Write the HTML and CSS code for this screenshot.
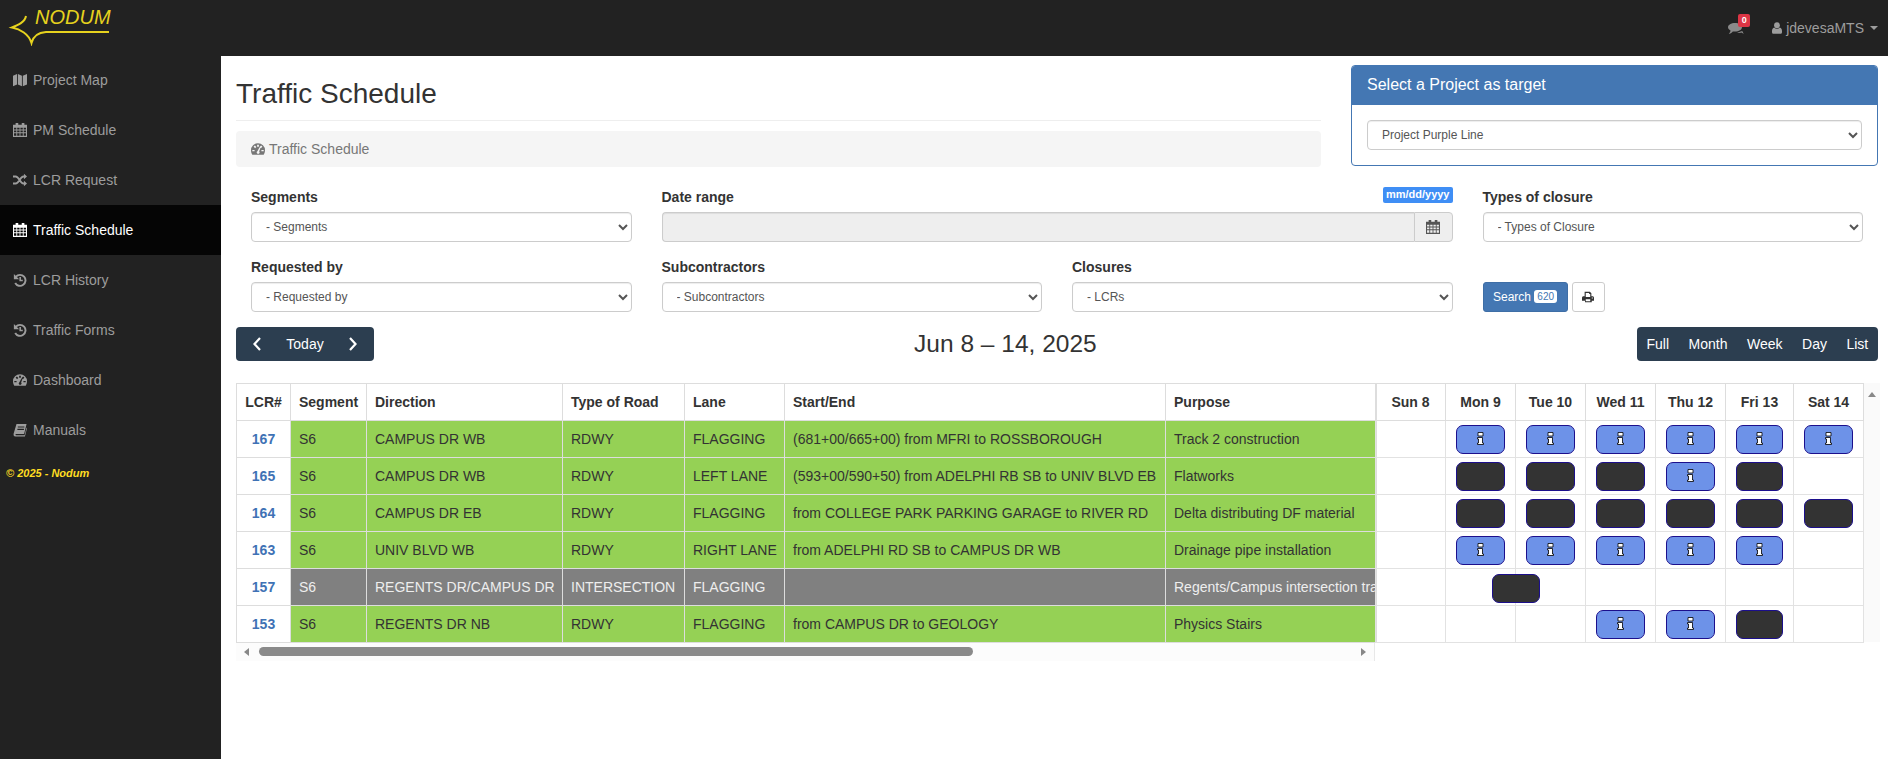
FILE: index.html
```html
<!DOCTYPE html>
<html lang="en">
<head>
<meta charset="utf-8">
<title>Traffic Schedule</title>
<link rel="stylesheet" href="styles.css">
</head>
<body>
<svg class="sprite" xmlns="http://www.w3.org/2000/svg">
  <symbol id="i-map" viewBox="0 0 16 16"><path d="M0 3.2 4.6 1v12L0 15.2zM5.6 1l4.6 2.2v12L5.6 13zM11.2 3.2 16 1v12l-4.8 2.2z"/></symbol>
  <symbol id="i-cal" viewBox="0 0 16 16"><path fill-rule="evenodd" d="M3 0h3v2h4V0h3v2h3v14H0V2h3zM1.2 5.5v2h2.6v-2zm3.6 0v2h2.7v-2zm3.7 0v2h2.700v-2zm3.700 0v2h2.600v-2zM1.200 8.500v2.200h2.600V8.500zm3.600 0v2.200h2.700V8.500zm3.700 0v2.200h2.700V8.500zm3.700 0v2.200h2.600V8.500zM1.200 11.700v3h2.600v-3zm3.600 0v3h2.700v-3zm3.700 0v3h2.700v-3zm3.700 0v3h2.600v-3z"/></symbol>
  <symbol id="i-random" viewBox="0 0 16 16"><path d="M0 4h3c4 0 5 8 9 8h1M0 12h3c4 0 5-8 9-8h1" fill="none" stroke="currentColor" stroke-width="2.1"/><path d="M12.500 .8 16 4l-3.500 3.200zM12.500 8.800 16 12l-3.500 3.200z"/></symbol>
  <symbol id="i-history" viewBox="0 0 16 16"><path d="M3.300 4.200A6.300 6.300 0 1 1 2.500 11.500" fill="none" stroke="currentColor" stroke-width="2.2"/><path d="M1 1v6h6z"/><path d="M8.200 4.500v4h3" fill="none" stroke="currentColor" stroke-width="1.8"/></symbol>
  <symbol id="i-gauge" viewBox="0 0 16 16"><path fill-rule="evenodd" d="M8 1.500a8 8 0 0 0-8 8c0 2 .6 3.700 1.500 5h13c.9-1.300 1.500-3 1.500-5a8 8 0 0 0-8-8zM7 3h2v2.500H7zM3 5.200l1.500-1.300 1.600 1.800-1.500 1.300zM1.500 9h2.600v1.700H1.500zM11.900 9h2.600v1.700h-2.600zM11.500 3.900 13 5.200l-1.600 1.800-1.500-1.300zM9.800 6l1 .5-1.500 4.300a1.600 1.600 0 1 1-2-.2z"/></symbol>
  <symbol id="i-book" viewBox="0 0 16 16"><path fill-rule="evenodd" d="M4 1h11.500l-2.800 11.500H3.600c-1 0-1.300 1.500 0 1.500h9.700l2.200-9 .5 1-2.400 9.500H3C.6 15.500.2 13 1 11zM5.500 4v1.200h7.500V4zM5 6.700v1.200h7.500V6.700z"/></symbol>
  <symbol id="i-comments" viewBox="0 0 16 14"><path d="M7 1c3.900 0 7 1.900 7 4.300S10.900 9.600 7 9.600c-.8 0-1.500-.1-2.200-.2C3.700 11 2 11.800 .8 11.800c1-.9 1.600-2 1.700-3.300C1 7.600 0 6.500 0 5.300 0 2.900 3.100 1 7 1z"/><path d="M9 11c3 0 4-.2 4.500-.5.600.7 1.500 1.100 2.300 1.200-.6-.6-.9-1.300-1-2-.8-.8-1.800-.5-5.800 1.300z"/></symbol>
  <symbol id="i-user" viewBox="0 0 12 14"><circle cx="6" cy="3.700" r="3.500"/><path d="M2.700 6.500C3.600 7.400 4.700 8 6 8s2.400-.6 3.300-1.500C11 6.800 12 8.500 12 11v1c0 1-.8 2-2 2H2c-1.200 0-2-1-2-2v-1c0-2.500 1-4.200 2.700-4.500z"/></symbol>
  <symbol id="i-print" viewBox="0 0 16 16"><path fill-rule="evenodd" d="M3.500 1h7l2 2v4h1.500c1.100 0 2 .9 2 2v4h-3v2h-9v-2H0V9c0-1.100.9-2 2-2h1.500zM5 2.500V8h6V4h-1.500V2.500zM5 11v2.500h6V11zM13 8.500v1.500h1.500V8.500z"/></symbol>
  <symbol id="i-info" viewBox="0 0 7 13"><path d="M1 .5h5v3.500H1zM.5 5.500h5v5.500h1v1.500H.5V11h1V7h-1z" fill="#fff" stroke="#000" stroke-width=".8"/></symbol>
</svg>

<header class="topbar">
  <a class="logo">
    <svg class="logo-mark" viewBox="0 0 110 46" aria-hidden="true">
      <path d="M20 16C19 22 12 25 6 27.500 14 29 23 34 25.500 43 27 37 32 32.500 40 32H103" fill="none" stroke="#e6d21e" stroke-width="2"/>
    </svg>
    <span class="logo-text">NODUM</span>
  </a>
  <div class="top-right">
    <span class="msg">
      <svg class="msg-icon"><use href="#i-comments"/></svg>
      <span class="msg-badge">0</span>
    </span>
    <span class="account">
      <svg class="user-icon"><use href="#i-user"/></svg>
      <span>jdevesaMTS</span>
      <span class="caret"></span>
    </span>
  </div>
</header>

<div class="shell">
  <aside class="sidebar">
    <nav class="nav">
      <a class="nav-item"><svg class="ico"><use href="#i-map"/></svg>Project Map</a>
      <a class="nav-item"><svg class="ico"><use href="#i-cal"/></svg>PM Schedule</a>
      <a class="nav-item"><svg class="ico"><use href="#i-random"/></svg>LCR Request</a>
      <a class="nav-item active"><svg class="ico"><use href="#i-cal"/></svg>Traffic Schedule</a>
      <a class="nav-item"><svg class="ico"><use href="#i-history"/></svg>LCR History</a>
      <a class="nav-item"><svg class="ico"><use href="#i-history"/></svg>Traffic Forms</a>
      <a class="nav-item"><svg class="ico"><use href="#i-gauge"/></svg>Dashboard</a>
      <a class="nav-item"><svg class="ico"><use href="#i-book"/></svg>Manuals</a>
    </nav>
    <p class="copyright">© 2025 - Nodum</p>
  </aside>

  <main class="main">
    <section class="head-row">
      <div class="head-left">
        <h1 class="page-title">Traffic Schedule</h1>
        <div class="crumb"><svg class="ico"><use href="#i-gauge"/></svg>Traffic Schedule</div>
      </div>
      <div class="panel">
        <div class="panel-head">Select a Project as target</div>
        <div class="panel-body">
          <select class="field"><option>Project Purple Line</option></select>
        </div>
      </div>
    </section>

    <section class="filters">
      <div class="group">
        <label class="label">Segments</label>
        <select class="field"><option>- Segments</option></select>
      </div>
      <div class="group span2">
        <div class="label-row">
          <label class="label">Date range</label>
          <span class="hint">mm/dd/yyyy</span>
        </div>
        <div class="date-field">
          <input class="date-input" disabled>
          <span class="date-addon"><svg class="ico"><use href="#i-cal"/></svg></span>
        </div>
      </div>
      <div class="group">
        <label class="label">Types of closure</label>
        <select class="field"><option>- Types of Closure</option></select>
      </div>
      <div class="group">
        <label class="label">Requested by</label>
        <select class="field"><option>- Requested by</option></select>
      </div>
      <div class="group">
        <label class="label">Subcontractors</label>
        <select class="field"><option>- Subcontractors</option></select>
      </div>
      <div class="group">
        <label class="label">Closures</label>
        <select class="field"><option>- LCRs</option></select>
      </div>
      <div class="actions">
        <button class="btn-search">Search <span class="count">620</span></button>
        <button class="btn-print"><svg class="print-icon"><use href="#i-print"/></svg></button>
      </div>
    </section>

    <section class="cal-bar">
      <div class="btn-group nav-group">
        <button class="cal-btn arrow"><svg viewBox="0 0 10 16"><path d="M8 2 2.500 8 8 14"/></svg></button>
        <button class="cal-btn today">Today</button>
        <button class="cal-btn arrow"><svg viewBox="0 0 10 16"><path d="M2 2 7.500 8 2 14"/></svg></button>
      </div>
      <h2 class="cal-title">Jun 8 – 14, 2025</h2>
      <div class="btn-group views">
        <button class="cal-btn">Full</button>
        <button class="cal-btn">Month</button>
        <button class="cal-btn">Week</button>
        <button class="cal-btn">Day</button>
        <button class="cal-btn">List</button>
      </div>
    </section>

    <section class="grid-wrap">
      <div class="left-pane">
        <table class="sheet">
          <colgroup>
            <col class="c-lcr"><col class="c-seg"><col class="c-dir"><col class="c-type"><col class="c-lane"><col class="c-se"><col class="c-pur">
          </colgroup>
          <thead>
            <tr><th class="ctr">LCR#</th><th>Segment</th><th>Direction</th><th>Type of Road</th><th>Lane</th><th>Start/End</th><th>Purpose</th></tr>
          </thead>
          <tbody>
            <tr class="green"><td class="lcr">167</td><td>S6</td><td>CAMPUS DR WB</td><td>RDWY</td><td>FLAGGING</td><td>(681+00/665+00) from MFRI to ROSSBOROUGH</td><td>Track 2 construction</td></tr>
            <tr class="green"><td class="lcr">165</td><td>S6</td><td>CAMPUS DR WB</td><td>RDWY</td><td>LEFT LANE</td><td>(593+00/590+50) from ADELPHI RB SB to UNIV BLVD EB</td><td>Flatworks</td></tr>
            <tr class="green"><td class="lcr">164</td><td>S6</td><td>CAMPUS DR EB</td><td>RDWY</td><td>FLAGGING</td><td>from COLLEGE PARK PARKING GARAGE to RIVER RD</td><td>Delta distributing DF material</td></tr>
            <tr class="green"><td class="lcr">163</td><td>S6</td><td>UNIV BLVD WB</td><td>RDWY</td><td>RIGHT LANE</td><td>from ADELPHI RD SB to CAMPUS DR WB</td><td>Drainage pipe installation</td></tr>
            <tr class="gray"><td class="lcr">157</td><td>S6</td><td>REGENTS DR/CAMPUS DR</td><td>INTERSECTION</td><td>FLAGGING</td><td></td><td>Regents/Campus intersection traffic</td></tr>
            <tr class="green"><td class="lcr">153</td><td>S6</td><td>REGENTS DR NB</td><td>RDWY</td><td>FLAGGING</td><td>from CAMPUS DR to GEOLOGY</td><td>Physics Stairs</td></tr>
          </tbody>
        </table>
        <div class="hbar">
          <span class="arr-left"></span>
          <span class="hthumb"></span>
          <span class="arr-right"></span>
        </div>
      </div>

      <table class="gantt">
        <colgroup>
          <col class="d70"><col class="d70"><col class="d70"><col class="d70"><col class="d70"><col class="d68"><col class="d69">
        </colgroup>
        <thead>
          <tr><th>Sun 8</th><th>Mon 9</th><th>Tue 10</th><th>Wed 11</th><th>Thu 12</th><th>Fri 13</th><th>Sat 14</th></tr>
        </thead>
        <tbody>
          <tr><td></td>
            <td><div class="ev info"><svg class="i-i"><use href="#i-info"/></svg></div></td>
            <td><div class="ev info"><svg class="i-i"><use href="#i-info"/></svg></div></td>
            <td><div class="ev info"><svg class="i-i"><use href="#i-info"/></svg></div></td>
            <td><div class="ev info"><svg class="i-i"><use href="#i-info"/></svg></div></td>
            <td><div class="ev info"><svg class="i-i"><use href="#i-info"/></svg></div></td>
            <td><div class="ev info"><svg class="i-i"><use href="#i-info"/></svg></div></td>
          </tr>
          <tr><td></td>
            <td><div class="ev dark"></div></td>
            <td><div class="ev dark"></div></td>
            <td><div class="ev dark"></div></td>
            <td><div class="ev info"><svg class="i-i"><use href="#i-info"/></svg></div></td>
            <td><div class="ev dark"></div></td>
            <td></td>
          </tr>
          <tr><td></td>
            <td><div class="ev dark"></div></td>
            <td><div class="ev dark"></div></td>
            <td><div class="ev dark"></div></td>
            <td><div class="ev dark"></div></td>
            <td><div class="ev dark"></div></td>
            <td><div class="ev dark"></div></td>
          </tr>
          <tr><td></td>
            <td><div class="ev info"><svg class="i-i"><use href="#i-info"/></svg></div></td>
            <td><div class="ev info"><svg class="i-i"><use href="#i-info"/></svg></div></td>
            <td><div class="ev info"><svg class="i-i"><use href="#i-info"/></svg></div></td>
            <td><div class="ev info"><svg class="i-i"><use href="#i-info"/></svg></div></td>
            <td><div class="ev info"><svg class="i-i"><use href="#i-info"/></svg></div></td>
            <td></td>
          </tr>
          <tr><td></td>
            <td class="anchor"><div class="ev dark straddle"></div></td>
            <td></td><td></td><td></td><td></td><td></td>
          </tr>
          <tr><td></td><td></td><td></td>
            <td><div class="ev info"><svg class="i-i"><use href="#i-info"/></svg></div></td>
            <td><div class="ev info"><svg class="i-i"><use href="#i-info"/></svg></div></td>
            <td><div class="ev dark"></div></td>
            <td></td>
          </tr>
        </tbody>
      </table>
      <div class="vbar"><span class="arr-up"></span></div>
    </section>
  </main>
</div>
</body>
</html>
```
FILE: styles.css
```css
* { box-sizing: border-box; }

html, body {
  margin: 0;
  height: 759px;
  overflow: hidden;
}

body {
  font-family: "Liberation Sans", Arial, sans-serif;
  font-size: 14px;
  line-height: 20px;
  color: #333;
  background: #fff;
  display: flex;
  flex-direction: column;
}

.sprite { display: none; }

.ico {
  width: 14px;
  height: 14px;
  fill: currentColor;
  flex: none;
}

/* top bar */
.topbar {
  height: 56px;
  flex: none;
  background: #222;
  display: flex;
  justify-content: space-between;
  align-items: center;
  position: relative;
  z-index: 2;
}

.logo {
  position: relative;
  display: block;
  width: 120px;
  height: 56px;
  margin-left: 5px;
}

.logo-mark {
  position: absolute;
  left: 1px;
  top: 0;
  width: 110px;
  height: 46px;
}

.logo-text {
  position: absolute;
  left: 30px;
  top: 5px;
  font-size: 20px;
  line-height: 24px;
  font-style: italic;
  color: #e6d21e;
}

.top-right {
  display: flex;
  align-items: center;
  margin-right: 10px;
}

.msg {
  position: relative;
  display: block;
  width: 22px;
  height: 30px;
  margin-right: 22px;
  color: #8a8a8a;
}

.msg-icon {
  position: absolute;
  left: 0;
  top: 9px;
  width: 16px;
  height: 14px;
  fill: currentColor;
}

.msg-badge {
  position: absolute;
  left: 10px;
  top: 1px;
  width: 12px;
  height: 13px;
  border-radius: 2px;
  background: #dc3545;
  color: #fff;
  font-size: 9px;
  font-weight: bold;
  line-height: 13px;
  text-align: center;
}

.account {
  display: flex;
  align-items: center;
  color: #9d9d9d;
}

.user-icon {
  width: 10px;
  height: 12px;
  margin-right: 4px;
  fill: currentColor;
}

.caret {
  width: 0;
  height: 0;
  margin-left: 6px;
  border-left: 4px solid transparent;
  border-right: 4px solid transparent;
  border-top: 4px solid #9d9d9d;
}

/* shell */
.shell {
  flex: 1;
  display: flex;
  min-height: 0;
}

.sidebar {
  width: 221px;
  flex: none;
  background: #222;
}

.nav {
  margin-top: -1px;
  display: flex;
  flex-direction: column;
}

.nav-item {
  height: 50px;
  display: flex;
  align-items: center;
  gap: 6px;
  padding-left: 13px;
  color: #9d9d9d;
}

.nav-item.active {
  background: #050505;
  color: #fff;
}

.copyright {
  margin: 9px 0 0 6px;
  font-size: 11px;
  line-height: 18px;
  font-weight: bold;
  font-style: italic;
  color: #ffdd22;
}

/* main */
.main {
  flex: 1;
  min-width: 0;
  padding: 9px 10px 0 15px;
}

.head-row {
  display: flex;
  gap: 30px;
  align-items: flex-start;
}

.head-left {
  flex: 1;
  min-width: 0;
}

.page-title {
  margin: 14px 0 10px;
  padding-bottom: 11px;
  border-bottom: 1px solid #eee;
  font-size: 28px;
  line-height: 30px;
  font-weight: normal;
  color: #333;
}

.crumb {
  height: 36px;
  display: flex;
  align-items: center;
  gap: 4px;
  padding-left: 15px;
  border-radius: 4px;
  background: #f5f5f5;
  color: #777;
}

.panel {
  width: 527px;
  flex: none;
  height: 101px;
  border: 1px solid #4477b3;
  border-radius: 4px;
  overflow: hidden;
}

.panel-head {
  height: 39px;
  padding-left: 15px;
  background: #4477b3;
  color: #fff;
  font-size: 16px;
  line-height: 38px;
}

.panel-body {
  padding: 15px;
}

.field {
  display: block;
  width: 100%;
  height: 30px;
  padding: 0 10px;
  border: 1px solid #ccc;
  border-radius: 4px;
  background-color: #fff;
  color: #555;
  font-family: inherit;
  font-size: 12px;
  box-shadow: inset 0 1px 1px rgba(0, 0, 0, .075);
}

/* filters */
.filters {
  margin: 20px 15px 0;
  display: grid;
  grid-template-columns: repeat(4, 1fr);
  column-gap: 30px;
  row-gap: 15px;
}

.span2 { grid-column: span 2; }

.label {
  display: block;
  margin-bottom: 5px;
  font-weight: bold;
  line-height: 20px;
  color: #333;
}

.label-row {
  display: flex;
  justify-content: space-between;
  align-items: flex-start;
}

.hint {
  height: 16px;
  padding: 0 3px;
  border-radius: 2px;
  background: #3f8ef5;
  color: #fff;
  font-size: 11px;
  font-weight: bold;
  line-height: 15px;
}

.date-field {
  display: flex;
  height: 30px;
}

.date-input {
  flex: 1;
  min-width: 0;
  height: 30px;
  border: 1px solid #ccc;
  border-right: 0;
  border-radius: 4px 0 0 4px;
  background: #eee;
  box-shadow: inset 0 1px 1px rgba(0, 0, 0, .075);
}

.date-addon {
  width: 39px;
  display: flex;
  align-items: center;
  justify-content: center;
  border: 1px solid #ccc;
  border-radius: 0 4px 4px 0;
  background: #eee;
  color: #555;
}

.actions {
  display: flex;
  align-items: flex-end;
  gap: 4px;
}

.btn-search {
  width: 85px;
  height: 30px;
  padding: 0;
  border: 1px solid #3e6ea6;
  border-radius: 3px;
  background: #4477b3;
  color: #fff;
  font-family: inherit;
  font-size: 12px;
}

.count {
  display: inline-block;
  padding: 0 3px;
  border-radius: 3px;
  background: #fff;
  color: #4477b3;
  font-size: 10px;
  line-height: 13px;
  vertical-align: 1px;
}

.btn-print {
  width: 33px;
  height: 30px;
  padding: 0;
  border: 1px solid #ccc;
  border-radius: 3px;
  background: #fff;
  display: flex;
  align-items: center;
  justify-content: center;
  color: #333;
}

.print-icon {
  width: 12px;
  height: 12px;
  fill: currentColor;
}

/* calendar toolbar */
.cal-bar {
  margin-top: 15px;
  height: 34px;
  display: flex;
  justify-content: space-between;
  align-items: center;
}

.btn-group {
  display: flex;
  height: 34px;
  border-radius: 4px;
  background: #2c3e50;
}

.cal-btn {
  padding: 0 9.75px;
  border: 0;
  background: transparent;
  color: #fff;
  font-family: inherit;
  font-size: 14px;
  line-height: 34px;
}

.cal-btn.arrow {
  width: 42px;
  padding: 0;
  display: flex;
  align-items: center;
  justify-content: center;
}

.cal-btn.arrow svg {
  width: 10px;
  height: 16px;
  fill: none;
  stroke: #fff;
  stroke-width: 2.2;
}

.cal-btn.today {
  width: 54px;
  padding: 0;
}

.cal-title {
  margin: 0;
  font-size: 24.5px;
  line-height: 34px;
  font-weight: normal;
  color: #333;
}

/* grid */
.grid-wrap {
  margin-top: 22px;
  display: flex;
  align-items: flex-start;
}

.left-pane {
  width: 1139px;
  flex: none;
}

table {
  border-collapse: collapse;
  table-layout: fixed;
}

.sheet { width: 1139px; }

.c-lcr { width: 54px; }
.c-seg { width: 76px; }
.c-dir { width: 196px; }
.c-type { width: 122px; }
.c-lane { width: 100px; }
.c-se { width: 381px; }
.c-pur { width: 210px; }

.sheet th,
.sheet td {
  height: 37px;
  padding: 0 8px;
  border: 1px solid #ddd;
  text-align: left;
  white-space: nowrap;
  overflow: hidden;
}

.sheet th:last-child,
.sheet td:last-child { border-right: 2px solid #ddd; }

.sheet th.ctr,
.sheet td.lcr { text-align: center; }

.sheet th { color: #333; }

.sheet td.lcr {
  padding: 0;
  background: #fff;
  color: #3f72b5;
  font-weight: bold;
}

.green td { background: #95d155; color: #333; }
.gray td { background: #808080; color: #eee; }

.hbar {
  height: 18px;
  padding-top: 4px;
  display: flex;
  align-items: flex-start;
  background: #fcfcfc;
  border-right: 1px solid #e8e8e8;
}

.arr-left {
  margin: 1px 0 0 8px;
  border-top: 4px solid transparent;
  border-bottom: 4px solid transparent;
  border-right: 5px solid #888;
}

.hthumb {
  width: 714px;
  height: 9px;
  margin-left: 10px;
  border-radius: 5px;
  background: #8a8a8a;
}

.arr-right {
  margin: 1px 8px 0 auto;
  border-top: 4px solid transparent;
  border-bottom: 4px solid transparent;
  border-left: 5px solid #888;
}

.gantt {
  width: 488px;
  flex: none;
}

.d70 { width: 70px; }
.d68 { width: 68px; }
.d69 { width: 70px; }

.gantt th,
.gantt td {
  height: 37px;
  padding: 0;
  border: 1px solid #e2e2e2;
}

.gantt th {
  text-align: center;
  color: #333;
}

.gantt thead th { border-color: #ddd; }

.gantt td { vertical-align: top; }

.anchor { position: relative; }

.ev {
  height: 29px;
  margin: 4px 10px 0;
  border: 1px solid #1c0f8c;
  border-radius: 7px;
  display: flex;
  align-items: center;
  justify-content: center;
}

.ev.info { background: #6d92e8; }
.ev.dark { background: #333; }

.straddle {
  position: absolute;
  left: 46px;
  top: 0;
  width: 48px;
  margin: 5px 0 0;
  z-index: 1;
}

.i-i {
  width: 7px;
  height: 13px;
  margin-bottom: 2px;
}

.vbar {
  width: 16px;
  height: 259px;
  flex: none;
  display: flex;
  justify-content: center;
  padding-top: 9px;
  background: #fafafa;
}

.arr-up {
  height: 0;
  border-left: 4px solid transparent;
  border-right: 4px solid transparent;
  border-bottom: 5px solid #888;
}
```
